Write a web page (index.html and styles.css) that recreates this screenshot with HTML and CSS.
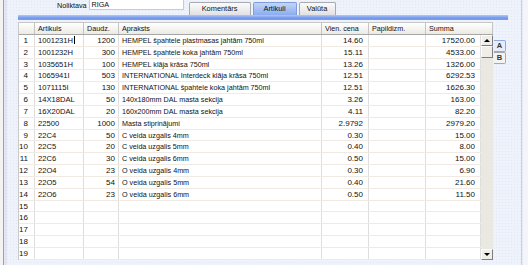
FILE: index.html
```html
<!DOCTYPE html>
<html>
<head>
    <meta charset="UTF-8" />
    <title>Artikuli</title>
    <link rel="stylesheet" href="styles.css">
</head>
<body>
    <div class="window">
        <div class="edge-left"></div>
        <div class="main">
            <div class="top">
                <div class="store">
                    <span class="store-label">Noliktava</span>
                    <div class="store-field">RIGA</div>
                </div>
                <div class="tabs">
                    <div class="tab tab-wide">Komentārs</div>
                    <div class="tab tab-mid active">Artikuli</div>
                    <div class="tab tab-small">Valūta</div>
                </div>
            </div>
            <div class="bar"></div>
            <div class="sheet">
                <div class="grid">
                    <div class="head-row">
                        <div class="hc"></div>
                        <div class="hc">Artikuls</div>
                        <div class="hc">Daudz.</div>
                        <div class="hc">Apraksts</div>
                        <div class="hc">Vien. cena</div>
                        <div class="hc">Papildizm.</div>
                        <div class="hc">Summa</div>
                    </div>
                    <div class="body">
                        <div class="rows">
                            <div class="row"><div class="c n">1</div><div class="c code">1001231H<span class="caret"></span></div><div class="c q">1200</div><div class="c">HEMPEL špahtele plastmasas jahtām 750ml</div><div class="c p">14.60</div><div class="c"></div><div class="c p">17520.00</div></div>
                            <div class="row"><div class="c n">2</div><div class="c code">1001232H</div><div class="c q">300</div><div class="c">HEMPEL špahtele koka jahtām 750ml</div><div class="c p">15.11</div><div class="c"></div><div class="c p">4533.00</div></div>
                            <div class="row"><div class="c n">3</div><div class="c code">1035651H</div><div class="c q">100</div><div class="c">HEMPEL klāja krāsa 750ml</div><div class="c p">13.26</div><div class="c"></div><div class="c p">1326.00</div></div>
                            <div class="row"><div class="c n">4</div><div class="c code">1065941I</div><div class="c q">503</div><div class="c">INTERNATIONAL Interdeck klāja krāsa 750ml</div><div class="c p">12.51</div><div class="c"></div><div class="c p">6292.53</div></div>
                            <div class="row"><div class="c n">5</div><div class="c code">1071115I</div><div class="c q">130</div><div class="c">INTERNATIONAL špahtele koka jahtām 750ml</div><div class="c p">12.51</div><div class="c"></div><div class="c p">1626.30</div></div>
                            <div class="row"><div class="c n">6</div><div class="c code">14X18DAL</div><div class="c q">50</div><div class="c">140x180mm DAL masta sekcija</div><div class="c p">3.26</div><div class="c"></div><div class="c p">163.00</div></div>
                            <div class="row"><div class="c n">7</div><div class="c code">16X20DAL</div><div class="c q">20</div><div class="c">160x200mm DAL masta sekcija</div><div class="c p">4.11</div><div class="c"></div><div class="c p">82.20</div></div>
                            <div class="row"><div class="c n">8</div><div class="c code">22500</div><div class="c q">1000</div><div class="c">Masta stiprinājumi</div><div class="c p">2.9792</div><div class="c"></div><div class="c p">2979.20</div></div>
                            <div class="row"><div class="c n">9</div><div class="c code">22C4</div><div class="c q">50</div><div class="c">C veida uzgalis 4mm</div><div class="c p">0.30</div><div class="c"></div><div class="c p">15.00</div></div>
                            <div class="row"><div class="c n">10</div><div class="c code">22C5</div><div class="c q">20</div><div class="c">C veida uzgalis 5mm</div><div class="c p">0.40</div><div class="c"></div><div class="c p">8.00</div></div>
                            <div class="row"><div class="c n">11</div><div class="c code">22C6</div><div class="c q">30</div><div class="c">C veida uzgalis 6mm</div><div class="c p">0.50</div><div class="c"></div><div class="c p">15.00</div></div>
                            <div class="row"><div class="c n">12</div><div class="c code">22O4</div><div class="c q">23</div><div class="c">O veida uzgalis 4mm</div><div class="c p">0.30</div><div class="c"></div><div class="c p">6.90</div></div>
                            <div class="row"><div class="c n">13</div><div class="c code">22O5</div><div class="c q">54</div><div class="c">O veida uzgalis 5mm</div><div class="c p">0.40</div><div class="c"></div><div class="c p">21.60</div></div>
                            <div class="row"><div class="c n">14</div><div class="c code">22O6</div><div class="c q">23</div><div class="c">O veida uzgalis 6mm</div><div class="c p">0.50</div><div class="c"></div><div class="c p">11.50</div></div>
                            <div class="row"><div class="c n">15</div><div class="c"></div><div class="c"></div><div class="c"></div><div class="c"></div><div class="c"></div><div class="c"></div></div>
                            <div class="row"><div class="c n">16</div><div class="c"></div><div class="c"></div><div class="c"></div><div class="c"></div><div class="c"></div><div class="c"></div></div>
                            <div class="row"><div class="c n">17</div><div class="c"></div><div class="c"></div><div class="c"></div><div class="c"></div><div class="c"></div><div class="c"></div></div>
                            <div class="row"><div class="c n">18</div><div class="c"></div><div class="c"></div><div class="c"></div><div class="c"></div><div class="c"></div><div class="c"></div></div>
                            <div class="row"><div class="c n">19</div><div class="c"></div><div class="c"></div><div class="c"></div><div class="c"></div><div class="c"></div><div class="c"></div></div>
                        </div>
                        <div class="scroll">
                            <div class="scroll-btn"><span class="arrow-up"></span></div>
                            <div class="scroll-thumb"></div>
                            <div class="scroll-track"></div>
                            <div class="scroll-btn"><span class="arrow-down"></span></div>
                        </div>
                    </div>
                </div>
                <div class="side-tabs">
                    <div class="side-tab active">A</div>
                    <div class="side-tab">B</div>
                </div>
            </div>
        </div>
        <div class="edge-right"></div>
    </div>
</body>
</html>
```

FILE: styles.css
```css
body {
    margin: 0;
    width: 528px;
    height: 265px;
    overflow: hidden;
    font-family: "Liberation Sans", Arial, sans-serif;
    font-size: 7.2px;
    color: #111;
    background-color: #eef2fb;
    background-image: radial-gradient(#e2e8f5 0.6px, transparent 0.9px);
    background-size: 3px 3px;
}

.window {
    display: flex;
    height: 265px;
}

.edge-left {
    width: 8px;
    flex: none;
    background: linear-gradient(to right, #f3f3f3 0 3px, #a2a2a2 3px 4px, #e2e4f1 4px 7px, transparent 7px);
}

.edge-right {
    width: 7px;
    flex: none;
    background: linear-gradient(to right, #cbd1de 0 1px, #e6eaf4 1px 2px, #f3f5fb 2px);
}

.main {
    flex: 1;
    padding-left: 10px;
    display: flex;
    flex-direction: column;
}

/* top line: warehouse + tabs */
.top {
    display: flex;
    height: 15px;
}

.store {
    display: flex;
    align-items: flex-end;
    height: 14px;
    margin-top: -4px;
    margin-left: 39px;
}

.store-label {
    line-height: 8px;
    margin-right: 2px;
}

.store-field {
    width: 95px;
    height: 14px;
    box-sizing: border-box;
    border: 1px solid #c4cad6;
    background: #fff;
    display: flex;
    align-items: flex-end;
    padding-left: 2px;
    line-height: 8px;
}

.tabs {
    display: flex;
    gap: 2px;
    margin-left: 5px;
    margin-top: 2px;
    height: 13px;
    font-size: 7.4px;
}

.tab {
    box-sizing: border-box;
    border: 1px solid #a8aab0;
    border-bottom: none;
    border-radius: 2px 2px 0 0;
    background: linear-gradient(#fbfbfb, #e1e1e4);
    text-align: center;
    line-height: 12px;
}

.tab-wide { width: 62px; }
.tab-mid { width: 44px; }
.tab-small { width: 37px; }

.tab.active {
    background: linear-gradient(#c3d6f8, #8aacef);
    border-color: #7f9ddc;
}

.bar {
    width: 490px;
    height: 5px;
    background: linear-gradient(#b2c8f5, #7397ec 60%, #7a9cec);
    margin-bottom: 2px;
}

/* grid */
.sheet {
    display: flex;
    gap: 1px;
}

.grid {
    width: 475px;
    box-sizing: border-box;
    border-left: 1px solid #c9c9c9;
}

.head-row {
    display: grid;
    grid-template-columns: 16px 49px 35px 203px 47px 57px 67px;
    height: 13px;
    box-sizing: border-box;
    border-top: 1px solid #c6c6c6;
    border-bottom: 1px solid #a6a6a6;
    background: linear-gradient(#ffffff, #ebeae4);
}

.hc {
    border-right: 1px solid #c4c4c4;
    padding-left: 3px;
    line-height: 11px;
    white-space: nowrap;
    overflow: hidden;
}

.body {
    display: flex;
}

.rows {
    width: 462px;
}

.row {
    display: grid;
    grid-template-columns: 16px 49px 35px 203px 47px 57px 55px;
    height: 11.83px;
    box-sizing: border-box;
    border-bottom: 1px solid #f0eae3;
    background: #fff;
}

.c {
    border-right: 1px solid #dedede;
    padding-left: 3px;
    line-height: 11px;
    white-space: nowrap;
    overflow: hidden;
}

.c.n {
    text-align: right;
    padding: 0 6px 0 0;
    font-size: 8px;
}

.c.code {
    font-size: 7.6px;
}

.c.q {
    text-align: right;
    padding: 0 3px 0 0;
    font-size: 8px;
}

.c.p {
    text-align: right;
    padding: 0 5px 0 0;
    font-size: 8px;
}

.caret {
    display: inline-block;
    width: 1px;
    height: 8px;
    background: #000;
    vertical-align: -1px;
    margin-left: 1px;
}

/* scrollbar */
.scroll {
    width: 12px;
    display: flex;
    flex-direction: column;
    background: #e9e8e1;
}

.scroll-btn,
.scroll-thumb {
    box-sizing: border-box;
    border: 1px solid;
    border-color: #fdfdfd #7e7e7e #7e7e7e #fdfdfd;
    background: #efeee9;
}

.scroll-btn {
    height: 11px;
    display: flex;
    align-items: center;
    justify-content: center;
}

.scroll-thumb {
    height: 12px;
}

.scroll-track {
    flex: 1;
}

.arrow-up {
    border-left: 3px solid transparent;
    border-right: 3px solid transparent;
    border-bottom: 3px solid #000;
}

.arrow-down {
    border-left: 3px solid transparent;
    border-right: 3px solid transparent;
    border-top: 3px solid #000;
}

/* A / B side tabs */
.side-tabs {
    margin-top: 18px;
    display: flex;
    flex-direction: column;
}

.side-tab {
    width: 12px;
    height: 12px;
    box-sizing: border-box;
    border: 1px solid #a9a9a9;
    border-left: none;
    border-radius: 0 2px 2px 0;
    background: #f3f3f3;
    text-align: center;
    line-height: 10px;
    font-size: 7.5px;
    font-weight: bold;
    color: #333;
}

.side-tab.active {
    background: #e5edfc;
    border-color: #8ea9dd;
}
```
